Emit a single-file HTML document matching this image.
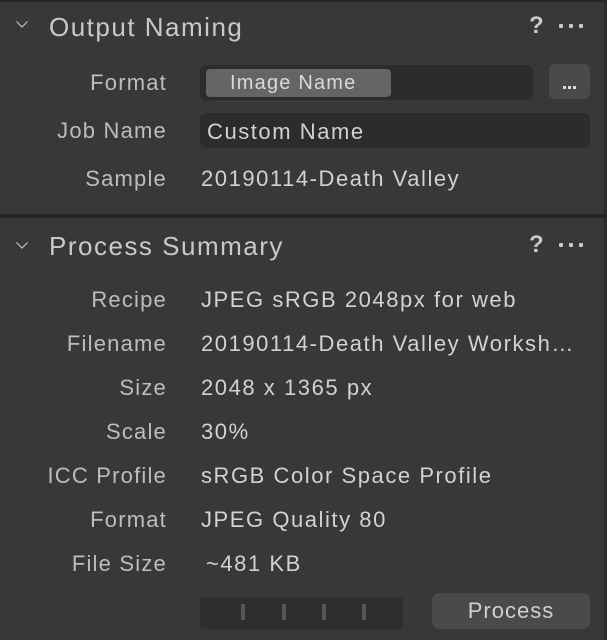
<!DOCTYPE html>
<html><head><style>
body{margin:0;width:607px;height:640px;background:#383838;overflow:hidden;font-family:"Liberation Sans",sans-serif;position:relative}
div{position:absolute}
.t{letter-spacing:1.2px;white-space:nowrap}
.h{font-size:26px;color:#c9c9c9;line-height:30px;letter-spacing:1.5px}
.l{font-size:22px;color:#bdbdbd;right:440px;line-height:26px;text-align:right}
.v{font-size:22px;color:#d2d2d2;left:201px;line-height:26px;letter-spacing:1.55px}
.q{font-size:24px;color:#c9c9c9;font-weight:bold;left:529px}
.d{left:559px;width:26px;height:4px}
.d i{position:absolute;top:0;width:4px;height:4px;background:#c9c9c9;border-radius:1px}
</style></head><body>
<div style="left:0;top:0;width:607px;height:2px;background:#262626"></div>
<div style="left:604px;top:0;width:3px;height:640px;background:#2a2a2a"></div>
<svg style="position:absolute;left:15px;top:19px" width="14" height="10"><path d="M1.5 2.5 L7 8 L12.5 2.5" stroke="#c0c0c0" stroke-width="1.2" fill="none"/></svg>
<div class="t h" style="left:49px;top:12px">Output Naming</div>
<div class="t q" style="top:12px">?</div>
<div class="d" style="top:24px"><i style="left:0"></i><i style="left:10px"></i><i style="left:20px"></i></div>

<div class="t l" style="top:70px">Format</div>
<div style="left:200px;top:65px;width:333px;height:35px;background:#2c2c2c;border-radius:6px"></div>
<div style="left:206px;top:69px;width:185px;height:28px;background:#656565;border-radius:4px"></div>
<div class="t" style="left:230px;top:70px;font-size:20px;color:#dadada;line-height:26px">Image Name</div>
<div style="left:549px;top:64px;width:41px;height:35px;background:#4a4a4a;border-radius:6px"></div>
<div style="left:563px;top:86px;width:3px;height:3px;background:#ddd"></div>
<div style="left:568px;top:86px;width:3px;height:3px;background:#ddd"></div>
<div style="left:573px;top:86px;width:3px;height:3px;background:#ddd"></div>

<div class="t l" style="top:118px">Job Name</div>
<div style="left:200px;top:113px;width:390px;height:35px;background:#2c2c2c;border-radius:6px"></div>
<div class="t v" style="left:207px;top:119px">Custom Name</div>

<div class="t l" style="top:166px">Sample</div>
<div class="t v" style="top:166px">20190114-Death Valley</div>

<div style="left:0;top:214px;width:607px;height:4px;background:#262626"></div>

<svg style="position:absolute;left:15px;top:240px" width="14" height="10"><path d="M1.5 2.5 L7 8 L12.5 2.5" stroke="#c0c0c0" stroke-width="1.2" fill="none"/></svg>
<div class="t h" style="left:49px;top:231px">Process Summary</div>
<div class="t q" style="top:231px">?</div>
<div class="d" style="top:243px"><i style="left:0"></i><i style="left:10px"></i><i style="left:20px"></i></div>

<div class="t l" style="top:287px">Recipe</div><div class="t v" style="top:287px">JPEG sRGB 2048px for web</div>
<div class="t l" style="top:331px">Filename</div><div class="t v" style="top:331px">20190114-Death Valley Worksh…</div>
<div class="t l" style="top:375px">Size</div><div class="t v" style="top:375px">2048 x 1365 px</div>
<div class="t l" style="top:419px">Scale</div><div class="t v" style="top:419px">30%</div>
<div class="t l" style="top:463px">ICC Profile</div><div class="t v" style="top:463px">sRGB Color Space Profile</div>
<div class="t l" style="top:507px">Format</div><div class="t v" style="top:507px">JPEG Quality 80</div>
<div class="t l" style="top:551px">File Size</div><div class="t v" style="left:206px;top:551px">~481 KB</div>

<div style="left:200px;top:597px;width:203px;height:32px;background:#2d2d2d;border-radius:4px"></div>
<div style="left:241px;top:604px;width:4px;height:16px;background:#555"></div>
<div style="left:282px;top:604px;width:4px;height:16px;background:#555"></div>
<div style="left:322px;top:604px;width:4px;height:16px;background:#555"></div>
<div style="left:362px;top:604px;width:4px;height:16px;background:#555"></div>
<div style="left:432px;top:593px;width:158px;height:36px;background:#4a4a4a;border-radius:7px;color:#d0d0d0;font-size:22px;text-align:center;line-height:36px;letter-spacing:1px">Process</div>
</body></html>
